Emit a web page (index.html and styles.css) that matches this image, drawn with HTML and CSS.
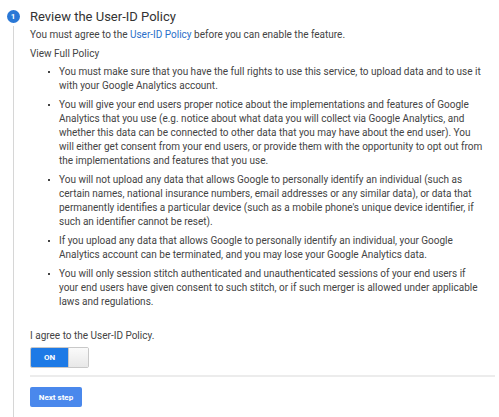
FILE: index.html
```html
<!DOCTYPE html>
<html lang="en">

<head>
    <meta charset="UTF-8">
    <meta name="viewport" content="width=device-width, initial-scale=1.0">
    <title>Review the User-ID Policy</title>
    <link rel="stylesheet" href="styles.css">
</head>

<body>

    <!-- Step 1 -->
    <div class="step">
        <div class="step-rail">
            <span class="step-num">1</span>
            <span class="rail-line"></span>
        </div>

        <div class="step-body">
            <h2 class="step-title">Review the User-ID Policy</h2>
            <p class="lead">You must agree to the <a href="#">User-ID Policy</a> before you can enable the feature.</p>
            <p class="full-policy">View Full Policy</p>

            <ul class="policy">
                <li>You must make sure that you have the full rights to use this service, to upload data and to use it with your Google Analytics account.</li>
                <li>You will give your end users proper notice about the implementations and features of Google Analytics that you use (e.g. notice about what data you will collect via Google Analytics, and whether this data can be connected to other data that you may have about the end user). You will either get consent from your end users, or provide them with the opportunity to opt out from the implementations and features that you use.</li>
                <li>You will not upload any data that allows Google to personally identify an individual (such as certain names, national insurance numbers, email addresses or any similar data), or data that permanently identifies a particular device (such as a mobile phone's unique device identifier, if such an identifier cannot be reset).</li>
                <li>If you upload any data that allows Google to personally identify an individual, your Google Analytics account can be terminated, and you may lose your Google Analytics data.</li>
                <li>You will only session stitch authenticated and unauthenticated sessions of your end users if your end users have given consent to such stitch, or if such merger is allowed under applicable laws and regulations.</li>
            </ul>

            <p class="agree">I agree to the User-ID Policy.</p>

            <div class="toggle">
                <span class="toggle-on">ON</span>
                <span class="toggle-knob"></span>
            </div>

            <div class="actions">
                <button type="button" class="next-btn">Next step</button>
            </div>
        </div>
    </div>

</body>

</html>
```

FILE: styles.css
```css
/* Basisopmaak */
body,
html {
    margin: 0;
    padding: 0;
    background: #fff;
    font-family: Roboto, Arial, sans-serif;
    color: #444;
}

/* Stap met nummer en verticale lijn */
.step {
    display: flex;
    min-height: 417px;
}

.step-rail {
    width: 30px;
    flex: none;
    display: flex;
    flex-direction: column;
    align-items: center;
    padding-top: 10px;
    box-sizing: border-box;
    padding-right: 4px;
}

.step-num {
    width: 13px;
    height: 13px;
    border-radius: 50%;
    background: #2a78d6;
    color: #fff;
    font-size: 8px;
    font-weight: bold;
    line-height: 13px;
    text-align: center;
    flex: none;
}

.rail-line {
    flex: 1;
    width: 1px;
    margin-top: 3px;
    background: #d6d6d6;
}

.step-body {
    flex: 1;
    padding-right: 4px;
    font-size: 10px;
    line-height: 14px;
}

.step-title {
    margin: 8px 0 0;
    font-size: 13px;
    font-weight: normal;
    line-height: 18px;
    color: #333;
}

.lead {
    margin: 2px 0 0;
}

.lead a {
    color: #2a6fc9;
    text-decoration: none;
}

.full-policy {
    margin: 5px 0 0;
}

/* Policy punten */
.policy {
    margin: 4px 0 0;
    padding: 0 11px 0 29px;
    list-style: none;
}

.policy li {
    position: relative;
    margin-bottom: 5px;
}

.policy li::before {
    content: "";
    position: absolute;
    left: -11px;
    top: 6px;
    width: 2px;
    height: 2px;
    background: #444;
}

.agree {
    margin: 20px 0 0;
}

/* Aan/uit schakelaar */
.toggle {
    display: flex;
    width: 59px;
    height: 21px;
    margin-top: 4px;
    border: 1px solid #c8c8c8;
    border-radius: 2px;
    box-sizing: border-box;
    overflow: hidden;
}

.toggle-on {
    width: 37px;
    background: #1d7ae6;
    color: #fff;
    font-size: 8px;
    font-weight: bold;
    line-height: 19px;
    text-align: center;
}

.toggle-knob {
    flex: 1;
    background: linear-gradient(#fafafa, #e8e8e8);
    border-left: 1px solid #c8c8c8;
}

/* Onderste knoppenbalk */
.actions {
    margin-top: 7px;
    padding-top: 10px;
    border-top: 2px solid #ececec;
}

.next-btn {
    display: block;
    width: 52px;
    height: 20px;
    padding: 0;
    border: none;
    border-radius: 2px;
    background: #4a88ec;
    color: #fff;
    font-family: Roboto, Arial, sans-serif;
    font-size: 8px;
    font-weight: bold;
    cursor: pointer;
}
```
